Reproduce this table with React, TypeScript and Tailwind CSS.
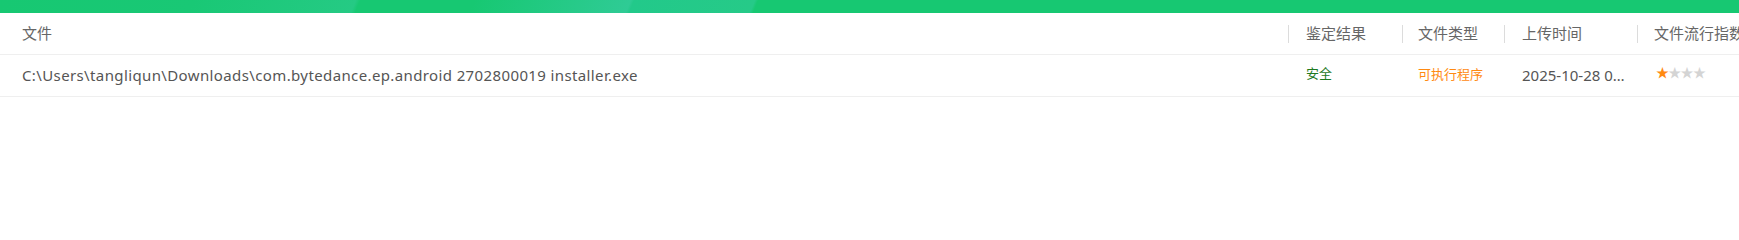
const columns = [
  { title: "文件", width: "w-[1288px]", pad: "pl-[22px]", divider: false },
  { title: "鉴定结果", width: "w-[114px]", pad: "pl-[18px]", divider: true },
  { title: "文件类型", width: "w-[102px]", pad: "pl-[16px]", divider: true },
  { title: "上传时间", width: "w-[133px]", pad: "pl-[18px]", divider: true },
  { title: "文件流行指数", width: "w-[140px]", pad: "pl-[17px]", divider: true },
];

const rows = [
  {
    path: "C:\\Users\\tangliqun\\Downloads\\com.bytedance.ep.android 2702800019 installer.exe",
    verdict: "安全",
    type: "可执行程序",
    uploaded: "2025-10-28 09:41:17",
    popularity: 1,
  },
];

const Stars = ({ value }: { value: number }) => (
  <div className="flex text-[13px] leading-none -mt-[6px]">
    {[0, 1, 2, 3].map((i) => (
      <span key={i} className={i < value ? "w-[12.3px] text-[#ff8a12]" : "w-[12.3px] text-[#d4d4d4]"}>
        ★
      </span>
    ))}
  </div>
);

export default function App() {
  return (
    <div
      className="w-[1739px] h-[240px] overflow-hidden bg-white"
      style={{ fontFamily: '"Noto Sans", "Noto Sans CJK SC", sans-serif' }}
    >
      {/* top bar */}
      <div className="h-[13px] bg-[linear-gradient(112deg,#17c872_0px,#19c875_180px,#25ca84_330px,#17c872_334px,#17c872_440px,#2fcb95_585px,#22c98a_588px,#26ca88_700px,#17c872_703px,#17c872_100%)]" />

      <div className="w-[1900px] whitespace-nowrap">
        {/* header */}
        <div className="flex h-[42px] items-center border-b border-[#efefef] text-[15px] text-[#666]">
          {columns.map((c) => (
            <div key={c.title} className={`${c.width} ${c.pad} relative flex h-full items-center`}>
              {c.divider && <span className="absolute left-0 top-[12px] h-[18px] w-px bg-[#dcdcdc]" />}
              {c.title}
            </div>
          ))}
        </div>

        {/* rows */}
        {rows.map((r) => (
          <div key={r.path} className="flex h-[42px] items-center border-b border-[#efefef]">
            <div className="w-[1288px] pl-[22px] text-[15px] tracking-[0.38px] text-[#555]">{r.path}</div>
            <div className="w-[114px] pl-[18px] text-[13px] text-[#1f7a1f] -mt-[4px]">{r.verdict}</div>
            <div className="w-[102px] pl-[16px] text-[13px] text-[#ff8a12] -mt-[2px]">{r.type}</div>
            <div className="w-[133px] pl-[18px] pr-[8px] text-[15px] text-[#555]">
              <div className="overflow-hidden text-ellipsis">{r.uploaded}</div>
            </div>
            <div className="w-[140px] pl-[19px]">
              <Stars value={r.popularity} />
            </div>
          </div>
        ))}
      </div>
    </div>
  );
}
